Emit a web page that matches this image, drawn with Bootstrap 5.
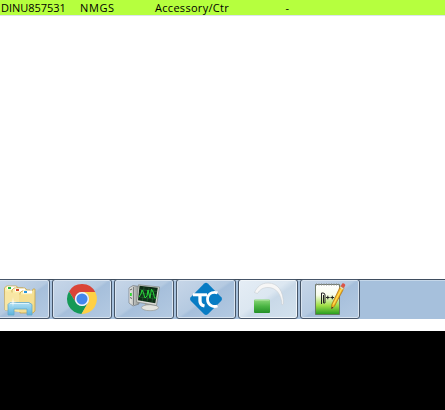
<!DOCTYPE html>
<html lang="en">
<head>
<meta charset="utf-8">
<meta name="viewport" content="width=device-width, initial-scale=1">
<title>Desktop</title>
<link rel="stylesheet" href="https://cdn.jsdelivr.net/npm/bootstrap@5.3.0/dist/css/bootstrap.min.css">
<script src="https://cdn.jsdelivr.net/npm/bootstrap@5.3.0/dist/js/bootstrap.bundle.min.js" defer></script>
<style>
body{width:445px;height:410px;overflow:hidden;font-family:"Open Sans","Noto Sans",sans-serif}
.record{height:16px;background:#b6ff3e;border-bottom:1px solid #dce5ec;font-size:11px;line-height:15px;color:#000;display:grid;grid-template-columns:80px 74px 131.500px 1fr;white-space:nowrap}
.record .code{letter-spacing:-.02px;padding-left:1px}
.record .group{letter-spacing:.6px}
.record .kind{letter-spacing:.3px;padding-left:1px}
.taskbar{height:40px;gap:2px;background:#a6c0dc;border-top:1px solid #3f4d5e;box-shadow:inset 0 1px #c5d7e9}
.task{width:60px;height:40px;margin-top:-1px;padding:0;flex:none;border:1px solid #465568;border-radius:3px;background:linear-gradient(145deg,#c7d6e8 0%,#b5cae1 48%,#a6bfdb 52%,#b4cae2 100%);box-shadow:inset 0 0 0 1px #d9e4f0}
.task.first{width:50px;border-left:0;border-radius:0 3px 3px 0;box-shadow:inset -1px 0 #d9e4f0,inset 0 1px #d9e4f0,inset 0 -1px #d9e4f0}
.task.active-task{background:linear-gradient(145deg,#e5edf5 0%,#dce7f1 45%,#c9d9e8 55%,#d3e2ee 100%);box-shadow:inset 0 0 0 1px #f1f6fa}
.task svg{display:block;margin:-1px}
.task.first svg{margin-left:0}
.gap-strip{height:12px}
.lower-area{height:79px}
</style>
</head>
<body class="d-flex flex-column bg-white">
<div class="record">
<span class="code">DINU857531</span><span class="group">NMGS</span><span class="kind">Accessory/Ctr</span><span>-</span>
</div>
<main class="flex-grow-1"></main>
<nav class="taskbar d-flex" aria-label="Taskbar">
<button class="task first" aria-label="Explorer">
<svg width="50" height="40" viewBox="0 0 50 40">
<defs><linearGradient id="fold" x2="1" y2="1"><stop stop-color="#fff4b5"/><stop offset="1" stop-color="#ecd17a"/></linearGradient><linearGradient id="stand" x2="0" y2="1"><stop stop-color="#b4e0f4"/><stop offset="1" stop-color="#5cb5dd"/></linearGradient></defs>
<path d="M4.500 9l2-2h10l1.500 2h5v22H5z" fill="url(#fold)" stroke="#c8a54c" stroke-width=".8"/>
<path d="M7 7.500h9v3H7z" fill="#fff"/><path d="M8 8h3v2H8z" fill="#20b83b"/>
<path d="M12 11l2-2h11l2 2h3v21H12z" fill="url(#fold)" stroke="#c8a54c" stroke-width=".8"/>
<path d="M15 9.500h10v3H15z" fill="#fff"/><path d="M16 10h3v2h-3z" fill="#d54325"/>
<path d="M20 14l2-2h10l1-2h2v22l-2 2H20z" fill="url(#fold)" stroke="#c8a54c" stroke-width=".8"/>
<path d="M23 11.500h9v3h-9z" fill="#fff"/><path d="M24 12h3v2h-3z" fill="#2695df"/>
<path d="M5 12l14 3v18L5 31z" fill="#f8e6a4"/><path d="M19 15.500h14.500V32l-2 1H19z" fill="#f5df92"/>
<path d="M10 23.500h19l3 2V36h-5v-6H14v6H8V25.500z" fill="url(#stand)" stroke="#63aacb" stroke-width=".8"/>
<path d="M10 24.500h19" stroke="#dff5fc"/><path d="M13 18l.6 4.400L17 23l-3.400.6L13 28l-.6-4.400L9 23l3.400-.6z" fill="#fff" opacity=".85"/>
</svg></button>
<button class="task" aria-label="Chrome">
<svg width="60" height="40" viewBox="0 0 60 40">
<path d="M17 12.500A15 15 0 0 1 43.200 13H30a7 7 0 0 0-6.100 10.500z" fill="#da4437"/>
<path d="M17 12.500A15 15 0 0 0 29.500 35L36 23.700A7 7 0 0 1 23.900 23.500z" fill="#159957"/>
<path d="M43.200 13A15 15 0 0 1 29.500 35L36 23.700A7 7 0 0 0 30 13z" fill="#ffd045"/>
<circle cx="30" cy="20" r="7" fill="#f5f7fa"/><circle cx="30" cy="20" r="5.600" fill="#4487ed"/>
</svg></button>
<button class="task" aria-label="System monitor">
<svg width="60" height="40" viewBox="0 0 60 40">
<defs><linearGradient id="metal"><stop stop-color="#eeeeea"/><stop offset="1" stop-color="#8f9492"/></linearGradient></defs>
<path d="M19 6.500l6 1V25l-6 2-4-3V9z" fill="url(#metal)" stroke="#777d82" stroke-width=".7"/>
<path d="M19.500 8v18" stroke="#7b8082"/><path d="M16 11l2-1M16 18.500l2 1" stroke="#666"/><path d="M16 14h1.800v3H16z" fill="#32db35"/>
<path d="M31 23h7v5h-7z" fill="#aaada9"/><ellipse cx="36" cy="28.700" rx="8.500" ry="3" fill="#e3e4df" stroke="#989b96" stroke-width=".7"/>
<path d="M24.500 5.800L45.500 8 42.500 26.500 22.600 23z" fill="#dcddd9" stroke="#7e837f" stroke-width=".7"/>
<path d="M25.500 6.800l18.300 2-2.500 15.400L24 21.300z" fill="#102d18"/>
<path d="M26 10.500l17 2M25.500 14l17 2M25 18l16 2M30 8l-1.500 14M35 9l-2 14M40 10l-2 13" stroke="#276b32" stroke-width=".6"/>
<path d="M25 18l2-3 1-4 1.500 3 1.500 5 2-2 1-6 2 8 1.500-9 2 4 1 5h2" fill="none" stroke="#28d93b" stroke-width="1"/>
</svg></button>
<button class="task" aria-label="TC">
<svg width="60" height="40" viewBox="0 0 60 40">
<path d="M28.200 4.400q1.800-1.500 3.600 0l13.500 13.800q1.500 1.800 0 3.600L31.800 35.300q-1.800 1.500-3.600 0L14.700 21.800q-1.500-1.800 0-3.600z" fill="#087cc4"/>
<path d="M17 15.800H31" stroke="#fff" stroke-width="3"/><path d="M24 16v6q0 4 4.500 5" fill="none" stroke="#fff" stroke-width="3.300"/>
<path d="M41.500 13.800q-3-1-5.500 0-4.500 1.700-4.500 6.500t4.500 6.700q2.500 1 5.500 0" fill="none" stroke="#fff" stroke-width="2.800"/>
</svg></button>
<button class="task active-task" aria-label="Unlocked">
<svg width="60" height="40" viewBox="0 0 60 40">
<defs><linearGradient id="green" x2="0" y2="1"><stop stop-color="#8bd779"/><stop offset=".5" stop-color="#4bb544"/><stop offset="1" stop-color="#238f27"/></linearGradient></defs>
<path d="M16.500 13.500C19 8 23 4 30 4c10 0 15.500 8 15.500 21l-1.500 1C43.500 15 38 8.500 30 8.500c-5 0-8 2-10.500 6z" fill="#f6f6f6" stroke="#c6cdd1" stroke-width=".6"/>
<rect x="16" y="20.500" width="16" height="13.500" rx="1" fill="url(#green)"/><path d="M17 21.500h14" stroke="#9bdd8c"/>
</svg></button>
<button class="task" aria-label="Notepad++">
<svg width="60" height="40" viewBox="0 0 60 40">
<defs><linearGradient id="note" x2="0" y2="1"><stop stop-color="#fff"/><stop offset=".35" stop-color="#f7fcea"/><stop offset=".7" stop-color="#a0df47"/><stop offset="1" stop-color="#239a21"/></linearGradient></defs>
<path d="M15.500 5.500h24v30h-24z" fill="url(#note)" stroke="#64715e" stroke-width=".9"/>
<path d="M16 5.500h23" stroke="#888" stroke-width="2" stroke-dasharray="1 1.500"/>
<path d="M21.500 25V14h1.500q2 0 2 2v8h-1.500v-8" fill="none" stroke="#222" stroke-width="1"/>
<path d="M26 18.500h3.600M27.800 16.700v3.600M30.500 18.500h3.600M32.300 16.700v3.600" stroke="#222" stroke-width="1"/>
<path d="M40.500 7l3.500 2.200L34.500 27 31.500 30l.3-4.500z" fill="#f6b51f" stroke="#a96f16" stroke-width=".7"/>
<path d="M42 9L33.300 25.500" stroke="#ffe05a" stroke-width="1.200"/><path d="M40.800 7l1.400-2.500q2-1 3.200 1.500L44 9z" fill="#db5447"/><path d="M40 7.800l3.500 2.400" stroke="#d8d8d8" stroke-width="1.200"/><path d="M31.700 27.700l-.2 2.300 1.800-1.600z" fill="#333"/>
</svg></button>
</nav>
<div class="gap-strip"></div>
<footer class="bg-black lower-area"></footer>
</body>
</html>
